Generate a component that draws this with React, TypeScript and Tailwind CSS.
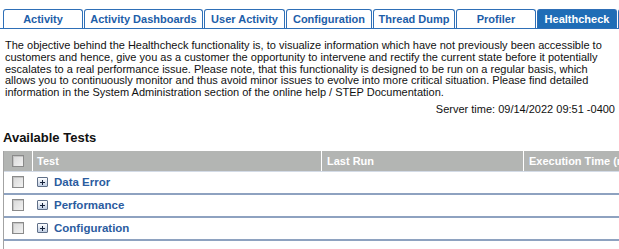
import React from "react";

const tabs = [
  { title: "Activity", w: "w-[80px]" },
  { title: "Activity Dashboards", w: "w-[119px]" },
  { title: "User Activity", w: "w-[81px]" },
  { title: "Configuration", w: "w-[86px]" },
  { title: "Thread Dump", w: "w-[82px]" },
  { title: "Profiler", w: "w-[80px]" },
  { title: "Healthcheck", w: "w-[80px]", active: true },
  { title: "", w: "w-[80px]" },
];

const tests = ["Data Error", "Performance", "Configuration"];

function Checkbox() {
  return (
    <div className="w-[12px] h-[12px] border border-[#8a8a8a] bg-gradient-to-br from-[#d8d8d8] to-[#f2f2f2] shadow-[inset_1px_1px_0_#c4c4c4]" />
  );
}

function PlusIcon() {
  return (
    <div className="relative w-[11px] h-[10px] border border-[#5f6f88] rounded-[1px] bg-gradient-to-b from-[#ffffff] to-[#bfcde2]">
      <div className="absolute left-[2px] top-[3.5px] w-[5px] h-px bg-[#14213a]" />
      <div className="absolute left-[4px] top-[1.5px] w-px h-[5px] bg-[#14213a]" />
    </div>
  );
}

export default function App() {
  return (
    <div className="w-[619px] h-[249px] overflow-hidden bg-white font-['Liberation_Sans',Arial,sans-serif] text-[#111]">
      {/* Tabs */}
      <div className="flex gap-px pl-[3px] pt-[9px] border-b border-[#2e6fb7] overflow-hidden">
        {tabs.map((tab, i) => (
          <div
            key={i}
            className={`${tab.w} shrink-0 h-[19px] flex items-center justify-center border border-b-0 border-[#2e6fb7] rounded-t-[3px] text-[11px] font-bold ${
              tab.active ? "bg-[#1f6db6] text-white" : "bg-white text-[#1d5ea9]"
            }`}
          >
            {tab.title}
          </div>
        ))}
      </div>

      {/* Description */}
      <p className="mt-[11px] px-[5px] text-[11px] leading-[11.75px]">
        The objective behind the Healthcheck functionality is, to visualize information which have not previously been accessible to
        customers and hence, give you as a customer the opportunity to intervene and rectify the current state before it potentially
        escalates to a real performance issue. Please note, that this functionality is designed to be run on a regular basis, which
        allows you to continuously monitor and thus avoid minor issues to evolve into more critical situation. Please find detailed
        information in the System Administration section of the online help / STEP Documentation.
      </p>
      <div className="mt-[4px] pr-[4px] text-right text-[11px] leading-[12px]">Server time: 09/14/2022 09:51 -0400</div>

      <h2 className="mt-[15px] pl-[3px] text-[13px] leading-[15px] font-bold">Available Tests</h2>

      {/* Table */}
      <div className="mt-[6px] ml-[3px] w-[700px] border-l border-[#a3a3a3] h-[120px]">
        <div className="flex h-[20px] bg-[#b3b5b3] text-[11px] font-bold text-white">
          <div className="w-[29px] shrink-0 border-r border-white flex items-center pl-[8px]">
            <Checkbox />
          </div>
          <div className="w-[289px] shrink-0 border-r border-white flex items-center pl-[4px]">Test</div>
          <div className="w-[202px] shrink-0 border-r border-white flex items-center pl-[5px]">Last Run</div>
          <div className="flex-1 flex items-center pl-[5px]">Execution Time (ms)</div>
        </div>
        <div className="h-px bg-[#d3dbe7]" />
        {tests.map((name) => (
          <div key={name} className="flex h-[23px] border-b-2 border-[#8ea2c0]">
            <div className="w-[29px] shrink-0 flex items-center pl-[8px]">
              <Checkbox />
            </div>
            <div className="flex items-center gap-[6px] pl-[4px] text-[11.5px] font-bold text-[#2b5c9f]">
              <PlusIcon />
              <span>{name}</span>
            </div>
          </div>
        ))}
      </div>
    </div>
  );
}
